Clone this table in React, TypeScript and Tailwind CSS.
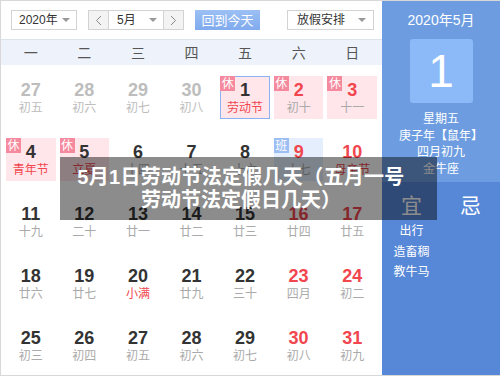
import React from 'react';

type Day = {
  n: number;
  lunar: string;
  prev?: boolean;
  red?: boolean;
  redLunar?: boolean;
  tag?: '休' | '班';
  today?: boolean;
};

const weekdays = ['一', '二', '三', '四', '五', '六', '日'];

const rows: Day[][] = [
  [
    { n: 27, lunar: '初五', prev: true },
    { n: 28, lunar: '初六', prev: true },
    { n: 29, lunar: '初七', prev: true },
    { n: 30, lunar: '初八', prev: true },
    { n: 1, lunar: '劳动节', redLunar: true, tag: '休', today: true },
    { n: 2, lunar: '初十', red: true, tag: '休' },
    { n: 3, lunar: '十一', red: true, tag: '休' },
  ],
  [
    { n: 4, lunar: '青年节', redLunar: true, tag: '休' },
    { n: 5, lunar: '立夏', redLunar: true, tag: '休' },
    { n: 6, lunar: '十四' },
    { n: 7, lunar: '十五' },
    { n: 8, lunar: '十六' },
    { n: 9, lunar: '十七', red: true, tag: '班' },
    { n: 10, lunar: '母亲节', red: true, redLunar: true },
  ],
  [
    { n: 11, lunar: '十九' },
    { n: 12, lunar: '二十' },
    { n: 13, lunar: '廿一' },
    { n: 14, lunar: '廿二' },
    { n: 15, lunar: '廿三' },
    { n: 16, lunar: '廿四', red: true },
    { n: 17, lunar: '廿五', red: true },
  ],
  [
    { n: 18, lunar: '廿六' },
    { n: 19, lunar: '廿七' },
    { n: 20, lunar: '小满', redLunar: true },
    { n: 21, lunar: '廿九' },
    { n: 22, lunar: '三十' },
    { n: 23, lunar: '四月', red: true },
    { n: 24, lunar: '初二', red: true },
  ],
  [
    { n: 25, lunar: '初三' },
    { n: 26, lunar: '初四' },
    { n: 27, lunar: '初五' },
    { n: 28, lunar: '初六' },
    { n: 29, lunar: '初七' },
    { n: 30, lunar: '初八', red: true },
    { n: 31, lunar: '初九', red: true },
  ],
];

const cjk = "font-['Liberation_Sans','Noto_Sans_CJK_SC',sans-serif]";

function Caret() {
  return <span className="w-0 h-0 border-l-[4px] border-r-[4px] border-t-[4px] border-l-transparent border-r-transparent border-t-[#999]" />;
}

function Cell({ d }: { d: Day }) {
  let bg = '';
  if (d.tag === '休') bg = 'bg-[#ffe6eb]';
  if (d.tag === '班') bg = 'bg-[#e4eefc]';
  const border = d.today ? 'border border-[#8cb2f2]' : 'border border-transparent';
  const numColor = d.prev ? 'text-[#bdbdbd]' : d.red ? 'text-[#f2464f]' : 'text-[#333]';
  const lunarColor = d.redLunar ? 'text-[#f2464f]' : d.prev ? 'text-[#bdbdbd]' : 'text-[#aaa]';
  return (
    <div className="px-[2px] pt-[11px] pb-[8px]">
      <div className={`relative h-[43px] flex flex-col items-center pt-[3px] ${bg} ${border}`}>
        {d.tag && (
          <span
            className={`absolute left-[-1px] top-[-1px] w-[15px] h-[15px] flex items-center justify-center text-[12px] leading-none text-white ${cjk} ${
              d.tag === '休' ? 'bg-[#f58a9e]' : 'bg-[#9dbef4]'
            }`}
          >
            {d.tag}
          </span>
        )}
        <span className={`font-['Liberation_Sans',Arial,sans-serif] font-bold text-[18px] leading-[20px] ${numColor}`}>{d.n}</span>
        <span className={`${cjk} text-[12px] leading-[16px] ${lunarColor}`}>{d.lunar}</span>
      </div>
    </div>
  );
}

export default function App() {
  return (
    <div className="relative w-[500px] h-[377px] bg-white overflow-hidden">
      <div className="flex w-[500px] h-[376px] border-t border-l border-b border-[#d8d8d8]">
        {/* calendar */}
        <div className="w-[381px] flex flex-col">
          <div className={`h-[38px] flex items-center pl-[10px] text-[12px] text-[#333] whitespace-nowrap ${cjk}`}>
            <div className="w-[66px] h-[20px] border border-[#d3d3d3] flex items-center justify-between pl-[7px] pr-[6px]">
              <span className="leading-none">2020年</span>
              <Caret />
            </div>
            <div className="ml-[11px] flex h-[20px] border border-[#d3d3d3]">
              <div className="w-[20px] bg-[#f3f3f3] flex items-center justify-center border-r border-[#d3d3d3]">
                <svg width="7" height="11" viewBox="0 0 7 11"><path d="M6 1 1.5 5.5 6 10" fill="none" stroke="#888" strokeWidth="1" /></svg>
              </div>
              <div className="w-[54px] flex items-center justify-between pl-[8px] pr-[6px]">
                <span className="leading-none">5月</span>
                <Caret />
              </div>
              <div className="w-[20px] bg-[#f3f3f3] flex items-center justify-center border-l border-[#d3d3d3]">
                <svg width="7" height="11" viewBox="0 0 7 11"><path d="M1 1 5.5 5.5 1 10" fill="none" stroke="#888" strokeWidth="1" /></svg>
              </div>
            </div>
            <div className="ml-[11px] w-[65px] h-[20px] bg-gradient-to-b from-[#9cc0f4] to-[#80aaee] text-white text-[13px] flex items-center justify-center leading-none">
              回到今天
            </div>
            <div className="ml-[27px] w-[87px] h-[20px] border border-[#d3d3d3] flex items-center justify-between pl-[9px] pr-[7px]">
              <span className="leading-none">放假安排</span>
              <Caret />
            </div>
          </div>
          <div className={`h-[26px] border-t border-[#dde3ec] bg-[#eef3fb] grid grid-cols-7 px-[3px] items-center text-[14px] text-[#555] ${cjk}`}>
            {weekdays.map((w) => (
              <div key={w} className="text-center leading-none">{w}</div>
            ))}
          </div>
          <div className="flex-1 px-[3px]">
            {rows.map((r, i) => (
              <div key={i} className="grid grid-cols-7">
                {r.map((d) => (
                  <Cell key={`${i}-${d.n}`} d={d} />
                ))}
              </div>
            ))}
          </div>
        </div>

        {/* side panel */}
        <div className={`flex-1 flex flex-col text-white ${cjk}`}>
          <div className="h-[181px] bg-[#6d9de0] flex flex-col items-center">
            <div className="mt-[10px] text-[14px] leading-[18px]">2020年5月</div>
            <div className="mt-[10px] w-[63px] h-[64px] rounded-[3px] bg-[#8cb9f7] flex items-center justify-center font-['Liberation_Sans',Arial,sans-serif] text-[46px] leading-none font-light">
              1
            </div>
            <div className="mt-[8px] flex flex-col items-center text-[12px] leading-[16.5px]">
              <span>星期五</span>
              <span>庚子年【鼠年】</span>
              <span>四月初九</span>
              <span>金牛座</span>
            </div>
          </div>
          <div className="flex-1 bg-[#5787d7] grid grid-cols-2 content-start">
            <div className="flex flex-col items-center">
              <span className="mt-[11px] text-[21px] leading-[26px]">宜</span>
              <div className="mt-[2px] flex flex-col items-center text-[12px] leading-[20.5px]">
                <span>出行</span>
                <span>造畜稠</span>
                <span>教牛马</span>
              </div>
            </div>
            <div className="flex flex-col items-center">
              <span className="mt-[11px] text-[21px] leading-[26px]">忌</span>
            </div>
          </div>
        </div>
      </div>

      {/* title overlay */}
      <div
        className={`absolute left-[60px] top-[157px] w-[377px] h-[63px] bg-[rgba(0,0,0,0.45)] flex flex-col justify-center items-center pl-[4px] pr-[19px] text-white font-bold text-[20px] leading-[23px] whitespace-nowrap ${cjk}`}
      >
        <span className="tracking-[0.3px]">5月1日劳动节法定假几天（五月一号</span>
        <span>劳动节法定假日几天）</span>
      </div>
    </div>
  );
}
